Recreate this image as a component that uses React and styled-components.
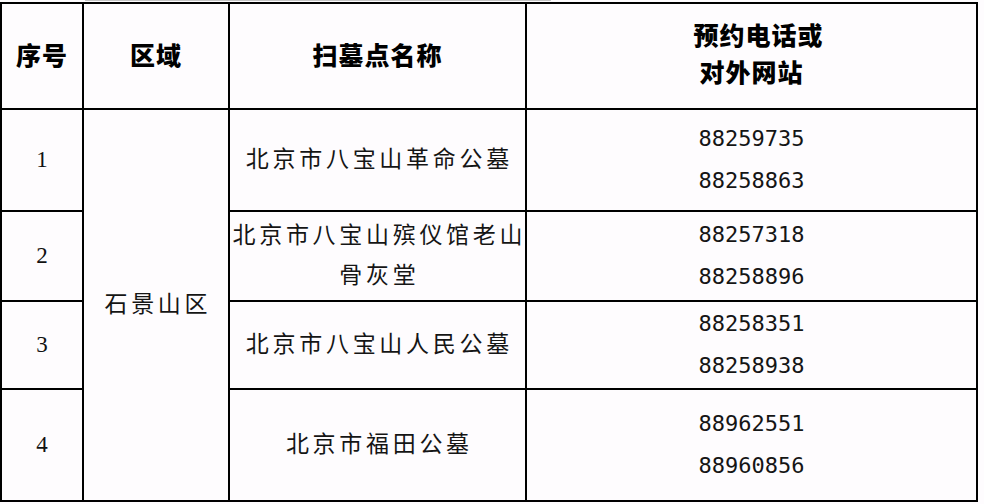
import React from "react";
import styled, { createGlobalStyle } from "styled-components";

const Global = createGlobalStyle`
  html, body {
    margin: 0;
    padding: 0;
    background: #fefcfe;
  }
  body {
    font-family: "Noto Sans CJK SC", "Noto Sans", sans-serif;
    color: #111;
  }
`;

const Page = styled.div`
  width: 984px;
  height: 504px;
  overflow: hidden;
  background: #fefcfe;
`;

const TopEdge = styled.div`
  margin-left: 85px;
  width: 466px;
  height: 1px;
  margin-bottom: 1px;
  background: #c4c4c4;
`;

const Grid = styled.div`
  display: grid;
  width: 978px;
  box-sizing: border-box;
  grid-template-columns: 80px 144px 295px 449px;
  grid-template-rows: 104px 100px 88px 86px 110px;
  gap: 2px;
  padding: 2px;
  background: #000;
`;

const Cell = styled.div`
  background: #fefcfe;
  display: flex;
  flex-direction: column;
  align-items: center;
  justify-content: center;
  text-align: center;
  box-sizing: border-box;
  padding-bottom: ${(p) => p.$lift || 0}px;
  ${(p) => (p.$span ? `grid-row: 2 / span 4; grid-column: 2;` : "")}
`;

const Head = styled.div`
  font-family: "Noto Sans CJK SC", sans-serif;
  font-weight: 900;
  font-size: 25px;
  line-height: 37px;
  letter-spacing: 1px;
  color: #000;
  white-space: nowrap;
  padding-left: ${(p) => p.$shift || 0}px;
`;

const Num = styled.div`
  font-family: "Liberation Serif", serif;
  font-size: 23px;
  color: #111;
`;

const Name = styled.div`
  font-family: "Noto Sans CJK SC", sans-serif;
  font-weight: 400;
  font-size: 23px;
  line-height: 40px;
  letter-spacing: 3.7px;
  padding-left: 3.7px;
  white-space: nowrap;
  color: #151515;
`;

const Phone = styled.div`
  font-family: "DejaVu Sans Mono", "Liberation Mono", monospace;
  font-size: 22px;
  line-height: 42px;
  color: #151515;
`;

const rows = [
  { n: "1", name: ["北京市八宝山革命公墓"], phones: ["88259735", "88258863"] },
  { n: "2", name: ["北京市八宝山殡仪馆老山", "骨灰堂"], phones: ["88257318", "88258896"] },
  { n: "3", name: ["北京市八宝山人民公墓"], phones: ["88258351", "88258938"] },
  { n: "4", name: ["北京市福田公墓"], phones: ["88962551", "88960856"] },
];

export default function App() {
  return (
    <Page>
      <Global />
      <TopEdge />
      <Grid>
        <Cell $lift={3}><Head>序号</Head></Cell>
        <Cell $lift={3}><Head>区域</Head></Cell>
        <Cell $lift={3}><Head>扫墓点名称</Head></Cell>
        <Cell $lift={7}>
          <Head $shift={14}>预约电话或</Head>
          <Head>对外网站</Head>
        </Cell>
        {rows.map((r, i) => (
          <React.Fragment key={r.n}>
            <Cell><Num>{r.n}</Num></Cell>
            {i === 0 && (
              <Cell $span $lift={6}>
                <Name>石景山区</Name>
              </Cell>
            )}
            <Cell $lift={6}>
              {r.name.map((t) => (
                <Name key={t}>{t}</Name>
              ))}
            </Cell>
            <Cell>
              {r.phones.map((p) => (
                <Phone key={p}>{p}</Phone>
              ))}
            </Cell>
          </React.Fragment>
        ))}
      </Grid>
    </Page>
  );
}
